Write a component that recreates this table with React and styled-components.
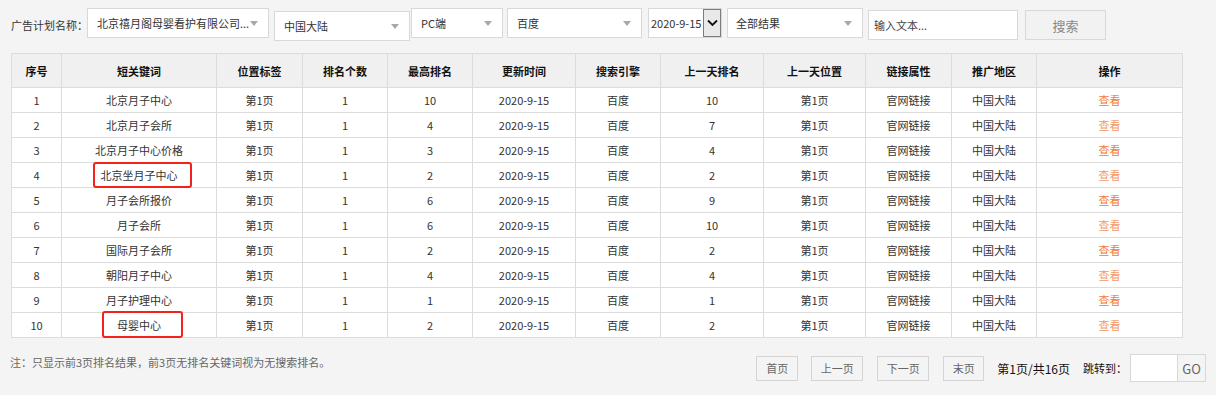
import React from "react";
import styled, { createGlobalStyle } from "styled-components";

const Global = createGlobalStyle`
  html, body { margin: 0; padding: 0; background: #f4f4f4; }
  body { font-family: "Noto Sans CJK SC", "Noto Sans", sans-serif; color: #333; font-size: 11px; }
  * { box-sizing: border-box; }
`;

const Page = styled.div`
  width: 1216px;
  height: 395px;
  padding: 8px 0 0 11px;
  overflow: hidden;
`;

const FilterBar = styled.div`
  display: flex;
  align-items: flex-start;
  height: 32px;
`;

const Label = styled.span`
  font-size: 11px;
  line-height: 16px;
  margin-top: 9px;
  color: #333;
  white-space: nowrap;
  width: 76px;
`;

const Select = styled.div`
  width: ${(p) => p.$w}px;
  height: ${(p) => p.$h || 30}px;
  margin-left: ${(p) => p.$ml || 0}px;
  margin-top: ${(p) => p.$mt || 0}px;
  padding-left: ${(p) => p.$pl || 9}px;
  background: #fff;
  border: 1px solid #d8d8d8;
  display: flex;
  align-items: center;
  font-size: 11px;
  color: #333;
  white-space: nowrap;
  overflow: hidden;
`;

const Caret = styled.span`
  margin-left: auto;
  margin-right: 10px;
  width: 0;
  height: 0;
  border-left: 4px solid transparent;
  border-right: 4px solid transparent;
  border-top: 5px solid #a8a8a8;
`;

const DateArrow = styled.span`
  margin-left: auto;
  width: 18px;
  height: 28px;
  border: 1px solid #7d7d7d;
  background: #e9e9e9;
  display: flex;
  align-items: center;
  justify-content: center;
`;

const TextInput = styled.div`
  width: ${(p) => p.$w}px;
  height: 30px;
  margin-left: ${(p) => p.$ml}px;
  margin-top: 2px;
  padding-left: 5px;
  background: #fff;
  border: 1px solid #d8d8d8;
  display: flex;
  align-items: center;
  font-size: 11px;
  color: #444;
`;

const SearchButton = styled.div`
  width: 81px;
  height: 30px;
  margin-left: 7px;
  margin-top: 2px;
  border: 1px solid #d8d8d8;
  background: #f2f2f2;
  color: #888;
  font-size: 13px;
  display: flex;
  align-items: center;
  justify-content: center;
`;

const Table = styled.table`
  margin-top: 13px;
  width: 1171px;
  border-collapse: collapse;
  table-layout: fixed;
  background: #fff;
`;

const Th = styled.th`
  height: 34px;
  padding: 0;
  background: #f0f0f0;
  border: 1px solid #dcdcdc;
  font-weight: bold;
  font-size: 11px;
  color: #111;
  text-align: center;
  line-height: 16px;
`;

const Td = styled.td`
  height: 25px;
  padding: 0;
  border: 1px solid #dcdcdc;
  font-size: 11px;
  color: #333;
  text-align: center;
  line-height: 16px;
  white-space: nowrap;
`;

const ViewLink = styled.span`
  color: ${(p) => (p.$even ? "#f29a6a" : "#f47b30")};
  cursor: pointer;
`;

const Marked = styled.span`
  position: relative;
  display: inline-block;
  &::after {
    content: "";
    position: absolute;
    left: ${(p) => p.$l}px;
    right: ${(p) => p.$r}px;
    top: ${(p) => p.$t}px;
    bottom: ${(p) => p.$b}px;
    border: 2px solid #f5221b;
    border-radius: 3px;
  }
`;

const Footer = styled.div`
  display: flex;
  align-items: center;
  width: 1195px;
  margin-top: 16px;
  height: 28px;
`;

const Note = styled.span`
  align-self: flex-start;
  margin-left: -1px;
  font-size: 11px;
  line-height: 16px;
  margin-top: 0px;
  color: #666;
`;

const Pager = styled.div`
  margin-left: auto;
  display: flex;
  align-items: center;
`;

const PageBtn = styled.div`
  width: ${(p) => p.$w}px;
  height: 25px;
  margin-left: ${(p) => p.$ml}px;
  border: 1px solid #d4d4d4;
  background: #f4f4f4;
  color: #666;
  font-size: 11px;
  display: flex;
  align-items: center;
  justify-content: center;
`;

const PageInfo = styled.span`
  margin-left: 13px;
  font-size: 12px;
  color: #111;
  white-space: nowrap;
`;

const JumpLabel = styled.span`
  margin-left: 13px;
  font-size: 11px;
  color: #111;
  white-space: nowrap;
`;

const JumpInput = styled.div`
  width: 48px;
  height: 28px;
  margin-left: 3px;
  background: #fff;
  border: 1px solid #d8d8d8;
`;

const GoBtn = styled.div`
  width: 28px;
  height: 28px;
  border: 1px solid #d8d8d8;
  border-left: none;
  background: #f4f4f4;
  color: #666;
  font-size: 13px;
  display: flex;
  align-items: center;
  justify-content: center;
`;

const cols = [50, 155, 86, 85, 85, 103, 85, 103, 102, 86, 85, 146];
const headers = ["序号", "短关键词", "位置标签", "排名个数", "最高排名", "更新时间", "搜索引擎", "上一天排名", "上一天位置", "链接属性", "推广地区", "操作"];

const rows = [
  ["北京月子中心", 10, 10],
  ["北京月子会所", 4, 7],
  ["北京月子中心价格", 3, 4],
  ["北京坐月子中心", 2, 2],
  ["月子会所报价", 6, 9],
  ["月子会所", 6, 10],
  ["国际月子会所", 2, 2],
  ["朝阳月子中心", 4, 4],
  ["月子护理中心", 1, 1],
  ["母婴中心", 2, 2],
];

const marks = {
  3: { l: -8, r: -14, t: -5, b: -5 },
  9: { l: -15, r: -22, t: -6, b: -5 },
};

export default function App() {
  return (
    <Page>
      <Global />
      <FilterBar>
        <Label>广告计划名称：</Label>
        <Select $w={182}>
          北京禧月阁母婴看护有限公司...
          <Caret />
        </Select>
        <Select $w={136} $ml={5} $mt={3}>
          中国大陆
          <Caret />
        </Select>
        <Select $w={92} $ml={1}>
          PC端
          <Caret />
        </Select>
        <Select $w={135} $ml={4}>
          百度
          <Caret />
        </Select>
        <Select $w={74} $ml={6} $pl={2}>
          2020-9-15
          <DateArrow>
            <svg width="11" height="8" viewBox="0 0 11 8">
              <path d="M1 1.5 L5.5 6 L10 1.5" fill="none" stroke="#111" strokeWidth="1.8" />
            </svg>
          </DateArrow>
        </Select>
        <Select $w={136} $ml={5} $pl={8}>
          全部结果
          <Caret />
        </Select>
        <TextInput $w={150} $ml={5}>输入文本...</TextInput>
        <SearchButton>搜索</SearchButton>
      </FilterBar>

      <Table>
        <colgroup>
          {cols.map((w, i) => (
            <col key={i} style={{ width: w }} />
          ))}
        </colgroup>
        <thead>
          <tr>
            {headers.map((h) => (
              <Th key={h}>{h}</Th>
            ))}
          </tr>
        </thead>
        <tbody>
          {rows.map(([kw, best, prev], i) => {
            const m = marks[i];
            return (
              <tr key={i}>
                <Td>{i + 1}</Td>
                <Td>{m ? <Marked $l={m.l} $r={m.r} $t={m.t} $b={m.b}>{kw}</Marked> : kw}</Td>
                <Td>第1页</Td>
                <Td>1</Td>
                <Td>{best}</Td>
                <Td>2020-9-15</Td>
                <Td>百度</Td>
                <Td>{prev}</Td>
                <Td>第1页</Td>
                <Td>官网链接</Td>
                <Td>中国大陆</Td>
                <Td>
                  <ViewLink $even={i % 2 === 1}>查看</ViewLink>
                </Td>
              </tr>
            );
          })}
        </tbody>
      </Table>

      <Footer>
        <Note>注：只显示前3页排名结果，前3页无排名关键词视为无搜索排名。</Note>
        <Pager>
          <PageBtn $w={42} $ml={0}>首页</PageBtn>
          <PageBtn $w={52} $ml={13}>上一页</PageBtn>
          <PageBtn $w={52} $ml={14}>下一页</PageBtn>
          <PageBtn $w={41} $ml={14}>末页</PageBtn>
          <PageInfo>第1页/共16页</PageInfo>
          <JumpLabel>跳转到：</JumpLabel>
          <JumpInput />
          <GoBtn>GO</GoBtn>
        </Pager>
      </Footer>
    </Page>
  );
}
